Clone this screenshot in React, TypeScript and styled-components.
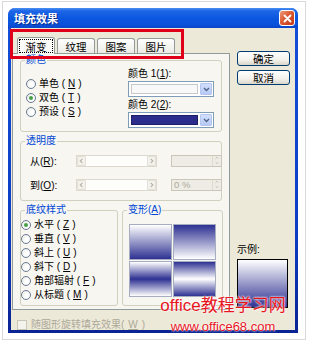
import React from 'react';
import styled, { createGlobalStyle } from 'styled-components';

const GlobalStyle = createGlobalStyle`
  html, body { margin: 0; padding: 0; background: #fff; }
  body {
    width: 310px; height: 344px; overflow: hidden;
    font-family: "Liberation Sans", "Noto Sans CJK SC", sans-serif;
    font-size: 10px; color: #000;
  }
  * { box-sizing: border-box; }
`;

const BLUE = '#2E3192';

// --- moldura e janela ---
const Frame = styled.div`
  position: relative;
  margin: 1px 0 0 2px;
  width: 304px; height: 339px;
  border: 1px solid #d9d9d9;
  padding: 6px 0 0 5px;
  background: #fff;
`;
const Window = styled.div`
  width: 290px; height: 325px;
  display: flex; flex-direction: column;
  border-radius: 7px 7px 0 0;
  background: linear-gradient(to bottom, #1450DA 0%, #0B3CC4 70%, #0A2392 100%);
`;
const TitleBar = styled.div`
  height: 20px; flex: none;
  display: flex; align-items: center; justify-content: space-between;
  padding: 0 3px 0 6px;
  border-radius: 7px 7px 0 0;
  background: linear-gradient(to bottom, #4A90F2 0%, #1E66E6 14%, #0C58E0 50%, #0A50DA 85%, #0B45C6 100%);
`;
const Title = styled.span`
  color: #fff; font-weight: bold; font-size: 11px;
  text-shadow: 1px 1px 0 #0A2A8A;
`;
const CloseButton = styled.div`
  width: 16px; height: 16px;
  border: 1px solid #fff; border-radius: 3px;
  background: linear-gradient(135deg, #EE9A78 0%, #DC5A34 45%, #C23A14 100%);
  display: flex; align-items: center; justify-content: center;
`;
const Body = styled.div`
  position: relative;
  flex: 1;
  margin: 0 3px 3px;
  background: #ECE9D8;
  display: flex; flex-direction: column;
  padding: 7px 0 0 1px;
`;
const MainRow = styled.div`
  display: flex; height: 275px;
`;

// --- abas ---
const TabControl = styled.div`
  width: 218px; display: flex; flex-direction: column;
`;
const TabStrip = styled.div`
  height: 18px; flex: none;
  display: flex; align-items: flex-end; gap: 2px;
  padding-left: 5px;
`;
const Tab = styled.div<{ $active?: boolean }>`
  width: 38px; height: ${p => (p.$active ? 17 : 15)}px;
  margin-bottom: ${p => (p.$active ? -1 : 0)}px;
  position: relative;
  border: 1px solid #919B9C; border-bottom: none;
  border-radius: 3px 3px 0 0;
  background: ${p => (p.$active ? '#FBFBF9' : 'linear-gradient(to bottom, #FFFFFF, #ECEBE6)')};
  display: flex; align-items: center; justify-content: center;
  font-size: 10.5px; padding: 1px;
`;
const FocusRing = styled.span`
  flex: 1; align-self: stretch;
  display: flex; align-items: center; justify-content: center;
  border: 1px dotted #000;
`;
const Panel = styled.div`
  flex: 1;
  border: 1px solid #919B9C;
  background: #F7F6F1;
  padding: 0 7px;
  display: flex; flex-direction: column; gap: 3px;
`;
const RedMark = styled.div`
  position: absolute; left: -1px; top: 1px;
  width: 174px; height: 30px;
  border: 3px solid #E1001A;
  pointer-events: none;
`;

// --- caixas de grupo ---
const Group = styled.fieldset`
  margin: 0; padding: 0; min-width: 0;
  border: 1px solid #D0D0BF; border-radius: 3px;
`;
const Legend = styled.legend`
  padding: 0 1px; margin-left: 4px;
  color: #0046D5; font-size: 10px; line-height: 12px;
`;
const ColorGrid = styled.div`
  display: grid; grid-template-columns: 102px 86px;
  padding: 1px 0 3px 5px;
`;
const RadioList = styled.div<{ $top: number }>`
  display: flex; flex-direction: column;
  padding-top: ${p => p.$top}px;
`;
const RadioRow = styled.div`
  height: 14px; display: flex; align-items: center; gap: 3px;
  line-height: 12px;
`;
const Radio = styled.span<{ $checked?: boolean }>`
  width: 10px; height: 10px; flex: none;
  border-radius: 50%;
  border: 1px solid #6A7C96;
  background: radial-gradient(circle at 60% 60%, #FFFFFF 30%, #E2E1DA 100%);
  display: flex; align-items: center; justify-content: center;
  &::after {
    content: '';
    width: 4px; height: 4px; border-radius: 50%;
    background: ${p => (p.$checked ? '#45A045' : 'transparent')};
  }
`;
const FieldLabel = styled.div`
  height: 13px; line-height: 13px;
`;
const Combo = styled.div<{ $gap?: number }>`
  width: 86px; height: 16px;
  margin: 1px 0 ${p => p.$gap ?? 0}px;
  border: 1px solid #7F9DB9; background: #fff;
  display: flex; padding: 1px;
`;
const Swatch = styled.div<{ $color: string; $edge: string }>`
  flex: 1; margin: 1px 2px 1px 1px;
  background: ${p => p.$color};
  border: 1px solid ${p => p.$edge};
`;
const DropButton = styled.div`
  width: 12px;
  border: 1px solid #B4C6F0; border-radius: 1px;
  background: linear-gradient(to bottom, #D2DEFB, #B6CAF6);
  display: flex; align-items: center; justify-content: center;
`;

const TransGrid = styled.div`
  display: grid;
  grid-template-columns: 32px 81px 51px;
  column-gap: 14px; row-gap: 9px;
  align-items: center;
  padding: 6px 0 8px 9px;
`;
const Slider = styled.div`
  height: 12px; display: flex;
  border: 1px solid #DCDACF; background: #FDFDFB;
`;
const SlideArrow = styled.div`
  width: 9px;
  border: 1px solid #E2E0D6; border-radius: 1px;
  background: #F3F2EC;
  display: flex; align-items: center; justify-content: center;
`;
const Spin = styled.div`
  height: 12px; display: flex; align-items: center;
  border: 1px solid #C9C7BA; background: #EEEDE5;
  color: #ACA899; padding-left: 2px; font-size: 9.5px;
`;
const SpinButton = styled.div`
  margin-left: auto; width: 9px; align-self: stretch;
  border-left: 1px solid #DDDBD0;
  display: flex; flex-direction: column; align-items: center; justify-content: center; gap: 1px;
`;

const BottomGroups = styled.div`
  display: grid; grid-template-columns: 98px 101px; column-gap: 4px;
`;
const TileGrid = styled.div`
  display: grid;
  grid-template-columns: 43px 43px;
  grid-template-rows: 36px 36px;
  gap: 1px;
  padding: 8px 0 8px 6px;
`;
const Tile = styled.div<{ $fill: string }>`
  border: 1px solid #A7ADC0;
  background: ${p => p.$fill};
`;

// --- coluna direita ---
const SideColumn = styled.div`
  width: 53px; margin-left: 7px;
  display: flex; flex-direction: column; gap: 4px;
  padding: 16px 0 2px;
`;
const Button = styled.div`
  height: 15px;
  border: 1px solid #003C74; border-radius: 3px;
  background: linear-gradient(to bottom, #FFFFFF 0%, #F3F2EC 60%, #D9D5C8 100%);
  display: flex; align-items: center; justify-content: center;
  font-size: 10.5px;
`;
const Sample = styled.div`
  margin-top: auto;
  display: flex; flex-direction: column; gap: 3px;
`;
const SampleBox = styled.div`
  width: 51px; height: 49px;
  border: 1px solid #000;
  background: linear-gradient(to bottom, #FFFFFF, ${BLUE});
`;

// --- rodapé ---
const CheckRow = styled.div`
  margin-top: 9px; padding-left: 5px;
  display: flex; align-items: center; gap: 4px;
  color: #ACA899; line-height: 11px;
`;
const CheckBox = styled.span`
  width: 10px; height: 10px;
  border: 1px solid #C9C7BA; background: #F4F3EC;
`;

const Watermark = styled.div`
  position: absolute; left: 140px; top: 293px; width: 160px;
  text-align: center; color: #E8141E;
  text-shadow: 0 0 2px #fff, 0 0 2px #fff;
  pointer-events: none;
`;
const MarkTitle = styled.div`
  font-size: 17px; line-height: 22px;
`;
const MarkUrl = styled.div`
  font-size: 13px; line-height: 16px; margin-top: 2px;
`;

const Chevron = ({ dir, color = '#B5B2A6', size = 6 }: { dir: 'l' | 'r' | 'u' | 'd'; color?: string; size?: number }) => {
  const d = { l: 'M4 1 L1.5 3.5 L4 6', r: 'M2 1 L4.5 3.5 L2 6', u: 'M1 4.5 L3.5 2 L6 4.5', d: 'M1 2 L3.5 4.5 L6 2' }[dir];
  return (
    <svg width={size} height={size} viewBox="0 0 7 7">
      <path d={d} fill="none" stroke={color} strokeWidth="1.3" />
    </svg>
  );
};

const shadings = [
  { label: '水平', key: 'Z', checked: true },
  { label: '垂直', key: 'V' },
  { label: '斜上', key: 'U' },
  { label: '斜下', key: 'D' },
  { label: '角部辐射', key: 'F' },
  { label: '从标题', key: 'M' },
];

const tiles = [
  `linear-gradient(to bottom, #FFFFFF, ${BLUE})`,
  `linear-gradient(to bottom, ${BLUE}, #FFFFFF)`,
  `linear-gradient(to bottom, #FFFFFF, ${BLUE} 50%, #FFFFFF)`,
  `linear-gradient(to bottom, ${BLUE}, #FFFFFF 50%, ${BLUE})`,
];

const App: React.FC = () => (
  <>
    <GlobalStyle />
    <Frame>
      <Window>
        <TitleBar>
          <Title>填充效果</Title>
          <CloseButton>
            <svg width="9" height="9" viewBox="0 0 9 9">
              <path d="M1.5 1.5 L7.5 7.5 M7.5 1.5 L1.5 7.5" stroke="#fff" strokeWidth="1.8" strokeLinecap="round" />
            </svg>
          </CloseButton>
        </TitleBar>
        <Body>
          <MainRow>
            <TabControl>
              <TabStrip>
                <Tab $active><FocusRing>渐变</FocusRing></Tab>
                <Tab>纹理</Tab>
                <Tab>图案</Tab>
                <Tab>图片</Tab>
              </TabStrip>
              <Panel>
                <Group>
                  <Legend>颜色</Legend>
                  <ColorGrid>
                    <RadioList $top={10}>
                      <RadioRow><Radio />单色 (<u>N</u>)</RadioRow>
                      <RadioRow><Radio $checked />双色 (<u>T</u>)</RadioRow>
                      <RadioRow><Radio />预设 (<u>S</u>)</RadioRow>
                    </RadioList>
                    <div>
                      <FieldLabel>颜色 1(<u>1</u>):</FieldLabel>
                      <Combo $gap={1}>
                        <Swatch $color="#F8F8F8" $edge="#C8C8C8" />
                        <DropButton><Chevron dir="d" color="#4D6185" size={7} /></DropButton>
                      </Combo>
                      <FieldLabel>颜色 2(<u>2</u>):</FieldLabel>
                      <Combo>
                        <Swatch $color="#2B2C8C" $edge="#1E1F6A" />
                        <DropButton><Chevron dir="d" color="#4D6185" size={7} /></DropButton>
                      </Combo>
                    </div>
                  </ColorGrid>
                </Group>

                <Group>
                  <Legend>透明度</Legend>
                  <TransGrid>
                    <span>从(<u>R</u>):</span>
                    <Slider>
                      <SlideArrow><Chevron dir="l" /></SlideArrow>
                      <div style={{ flex: 1 }} />
                      <SlideArrow><Chevron dir="r" /></SlideArrow>
                    </Slider>
                    <Spin>
                      <SpinButton><Chevron dir="u" size={4} /><Chevron dir="d" size={4} /></SpinButton>
                    </Spin>
                    <span>到(<u>O</u>):</span>
                    <Slider>
                      <SlideArrow><Chevron dir="l" /></SlideArrow>
                      <div style={{ flex: 1 }} />
                      <SlideArrow><Chevron dir="r" /></SlideArrow>
                    </Slider>
                    <Spin>
                      0 %
                      <SpinButton><Chevron dir="u" size={4} /><Chevron dir="d" size={4} /></SpinButton>
                    </Spin>
                  </TransGrid>
                </Group>

                <BottomGroups>
                  <Group>
                    <Legend>底纹样式</Legend>
                    <RadioList $top={2}>
                      {shadings.map(s => (
                        <RadioRow key={s.key}>
                          <Radio $checked={s.checked} />{s.label} (<u>{s.key}</u>)
                        </RadioRow>
                      ))}
                    </RadioList>
                  </Group>
                  <Group>
                    <Legend>变形(<u>A</u>)</Legend>
                    <TileGrid>
                      {tiles.map((t, i) => <Tile key={i} $fill={t} />)}
                    </TileGrid>
                  </Group>
                </BottomGroups>
              </Panel>
            </TabControl>

            <SideColumn>
              <Button>确定</Button>
              <Button>取消</Button>
              <Sample>
                <span>示例:</span>
                <SampleBox />
              </Sample>
            </SideColumn>
          </MainRow>
          <CheckRow>
            <CheckBox />
            随图形旋转填充效果(<u>W</u>)
          </CheckRow>
          <RedMark />
        </Body>
      </Window>
      <Watermark>
        <MarkTitle>office教程学习网</MarkTitle>
        <MarkUrl>www.office68.com</MarkUrl>
      </Watermark>
    </Frame>
  </>
);

export default App;
